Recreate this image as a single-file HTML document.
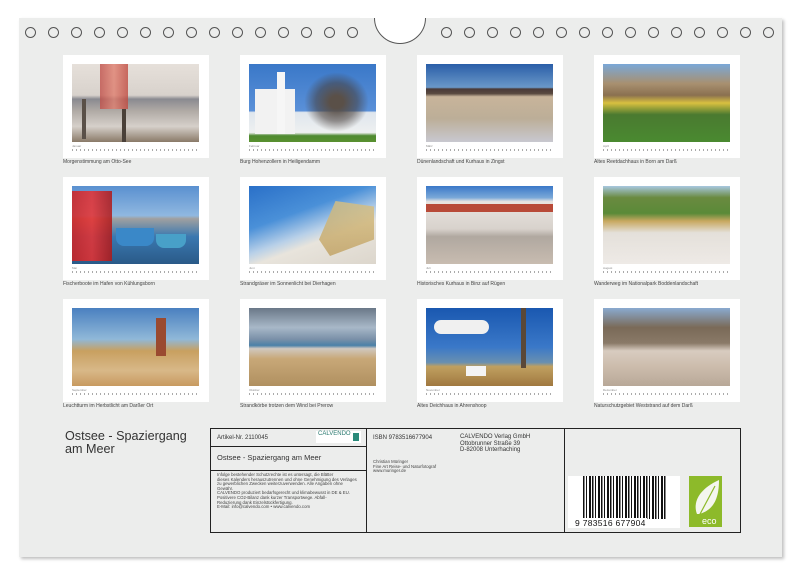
<!DOCTYPE html>
<html><head><meta charset="utf-8"><style>
*{margin:0;padding:0;box-sizing:border-box}
body{width:800px;height:577px;background:#fff;position:relative;overflow:hidden;font-family:"Liberation Sans",sans-serif;color:#333}
.panel{position:absolute;left:19px;top:18px;width:763px;height:539px;background:#ecedec;box-shadow:2px 2px 3px rgba(0,0,0,.25)}
.hole{position:absolute;top:27px;width:11px;height:11px;border:1.3px solid #555;border-radius:50%}
.notch{position:absolute;left:374px;top:-8px;width:52px;height:52px;border:1.3px solid #555;border-radius:50%;background:#fff}
.card{position:absolute;width:146px;height:103px;background:#fff}
.img{position:absolute;left:9px;top:9px;width:127px;height:78px;overflow:hidden}
.cal{position:absolute;left:9px;top:89px;width:127px;height:8px;font-size:3px;color:#888}
.cal:before{content:"";position:absolute;left:0;top:5px;width:127px;height:2px;background:repeating-linear-gradient(90deg,#aaa 0 1px,transparent 1px 4px)}
.cap{position:absolute;font-size:5px;color:#444;white-space:nowrap}
.box{position:absolute;border:1.3px solid #222}
</style></head><body>
<div class="panel"></div>
<div class="notch"></div>
<div style="position:absolute;left:360px;top:0;width:80px;height:18px;background:#fff"></div>

<div class="hole" style="left:25px"></div><div class="hole" style="left:48px"></div><div class="hole" style="left:71px"></div><div class="hole" style="left:94px"></div><div class="hole" style="left:117px"></div><div class="hole" style="left:140px"></div><div class="hole" style="left:163px"></div><div class="hole" style="left:186px"></div><div class="hole" style="left:209px"></div><div class="hole" style="left:232px"></div><div class="hole" style="left:255px"></div><div class="hole" style="left:278px"></div><div class="hole" style="left:301px"></div><div class="hole" style="left:324px"></div><div class="hole" style="left:347px"></div>
<div class="hole" style="left:441px"></div><div class="hole" style="left:464px"></div><div class="hole" style="left:487px"></div><div class="hole" style="left:510px"></div><div class="hole" style="left:533px"></div><div class="hole" style="left:556px"></div><div class="hole" style="left:579px"></div><div class="hole" style="left:602px"></div><div class="hole" style="left:625px"></div><div class="hole" style="left:648px"></div><div class="hole" style="left:671px"></div><div class="hole" style="left:694px"></div><div class="hole" style="left:717px"></div><div class="hole" style="left:740px"></div><div class="hole" style="left:763px"></div>

<!-- row 1 -->
<div class="card" style="left:63px;top:55px"><div class="img" style="background:linear-gradient(180deg,#e6e0da 0%,#d8d2cc 40%,#8a8a90 45%,#b0aaa5 60%,#d6d0ca 80%,#8a7a68 100%)"><div style="position:absolute;left:28px;top:0;width:28px;height:45px;background:linear-gradient(90deg,#c0504a,#e08070,#c04a40);opacity:.8"></div><div style="position:absolute;left:50px;top:45px;width:4px;height:33px;background:#4a4038"></div><div style="position:absolute;left:10px;top:35px;width:4px;height:40px;background:#5a5048"></div></div><div class="cal">Januar</div></div>
<div class="cap" style="left:63px;top:159px">Morgenstimmung am Otto-See</div>
<div class="card" style="left:240px;top:55px"><div class="img" style="background:linear-gradient(180deg,#3a78c8 0%,#5a90d8 60%,#dfe6ee 62%,#eef0f0 88%,#4e8a30 92%,#5a9030 100%)"><div style="position:absolute;left:6px;top:25px;width:40px;height:45px;background:#f2f2f2"></div><div style="position:absolute;left:28px;top:8px;width:8px;height:62px;background:#f6f6f6"></div><div style="position:absolute;left:55px;top:8px;width:65px;height:60px;border-radius:50%;background:radial-gradient(#5a5048 15%,rgba(70,60,55,.55) 45%,transparent 70%)"></div></div><div class="cal">Februar</div></div>
<div class="cap" style="left:240px;top:159px">Burg Hohenzollern in Heiligendamm</div>
<div class="card" style="left:417px;top:55px"><div class="img" style="background:linear-gradient(180deg,#2a5ea8 0%,#6a98c8 30%,#4a3a38 32%,#5a4a40 38%,#c8b49a 42%,#bcae98 70%,#c8c8d0 100%)"></div><div class="cal">März</div></div>
<div class="cap" style="left:417px;top:159px">Dünenlandschaft und Kurhaus in Zingst</div>
<div class="card" style="left:594px;top:55px"><div class="img" style="background:linear-gradient(180deg,#7aa8d8 0%,#a89070 25%,#8a7050 40%,#d8c040 50%,#4a7a30 65%,#4a8a30 100%)"></div><div class="cal">April</div></div>
<div class="cap" style="left:594px;top:159px">Altes Reetdachhaus in Born am Darß</div>

<!-- row 2 -->
<div class="card" style="left:63px;top:177px"><div class="img" style="background:linear-gradient(180deg,#5a90d0 0%,#90b8e0 38%,#a0a0a0 42%,#3a78b0 65%,#2a5a88 100%)"><div style="position:absolute;left:0;top:5px;width:40px;height:70px;background:linear-gradient(90deg,#d02020,#e83030,#b01818);opacity:.85"></div><div style="position:absolute;left:44px;top:42px;width:38px;height:18px;background:#3a88c8;border-radius:0 0 8px 8px"></div><div style="position:absolute;left:84px;top:48px;width:30px;height:14px;background:#48a0c8;border-radius:0 0 8px 8px"></div></div><div class="cal">Mai</div></div>
<div class="cap" style="left:63px;top:281px">Fischerboote im Hafen von Kühlungsborn</div>
<div class="card" style="left:240px;top:177px"><div class="img" style="background:linear-gradient(160deg,#2a70c8 0%,#4a90d8 35%,#b8d0e8 55%,#e8e4dc 65%,#dcd6cc 100%)"><div style="position:absolute;left:70px;top:15px;width:55px;height:55px;background:linear-gradient(180deg,#d8c080,#c0a060);opacity:.8;clip-path:polygon(30% 0,100% 10%,100% 70%,20% 100%,0 70%)"></div></div><div class="cal">Juni</div></div>
<div class="cap" style="left:240px;top:281px">Strandgräser im Sonnenlicht bei Dierhagen</div>
<div class="card" style="left:417px;top:177px"><div class="img" style="background:linear-gradient(180deg,#3a78c8 0%,#7aa8d8 15%,#e8e4e0 20%,#d8d2cc 55%,#b0a8a0 65%,#c8bcb0 100%)"><div style="position:absolute;left:0;top:18px;width:127px;height:8px;background:#b84a38"></div></div><div class="cal">Juli</div></div>
<div class="cap" style="left:417px;top:281px">Historisches Kurhaus in Binz auf Rügen</div>
<div class="card" style="left:594px;top:177px"><div class="img" style="background:linear-gradient(180deg,#a8c8e0 0%,#6a8a40 15%,#5a8a38 35%,#c8a860 45%,#e4e0da 60%,#eeeae6 100%)"></div><div class="cal">August</div></div>
<div class="cap" style="left:594px;top:281px">Wanderweg im Nationalpark Boddenlandschaft</div>

<!-- row 3 -->
<div class="card" style="left:63px;top:299px"><div class="img" style="background:linear-gradient(180deg,#4a80c0 0%,#90b8d8 40%,#c8a060 55%,#d8b888 80%,#c89a60 100%)"><div style="position:absolute;left:84px;top:10px;width:10px;height:38px;background:#9a4a30"></div></div><div class="cal">September</div></div>
<div class="cap" style="left:63px;top:403px">Leuchtturm im Herbstlicht am Darßer Ort</div>
<div class="card" style="left:240px;top:299px"><div class="img" style="background:linear-gradient(180deg,#6a7888 0%,#a8b8c8 25%,#7a90a8 40%,#4a80a8 48%,#d0c8c0 52%,#c8a878 65%,#b09060 100%)"></div><div class="cal">Oktober</div></div>
<div class="cap" style="left:240px;top:403px">Strandkörbe trotzen dem Wind bei Prerow</div>
<div class="card" style="left:417px;top:299px"><div class="img" style="background:linear-gradient(180deg,#1a58b0 0%,#3a78c8 50%,#6a90b0 70%,#c0a060 75%,#a07840 100%)"><div style="position:absolute;left:8px;top:12px;width:55px;height:14px;border-radius:10px;background:#f0f0f0"></div><div style="position:absolute;left:40px;top:58px;width:20px;height:10px;background:#f4f4f4"></div><div style="position:absolute;left:95px;top:0;width:5px;height:60px;background:#5a4838"></div></div><div class="cal">November</div></div>
<div class="cap" style="left:417px;top:403px">Altes Deichhaus in Ahrenshoop</div>
<div class="card" style="left:594px;top:299px"><div class="img" style="background:linear-gradient(180deg,#8aaad0 0%,#7a6a58 25%,#8a7a68 45%,#d8ccc0 55%,#ccbcac 75%,#b8a898 100%)"></div><div class="cal">Dezember</div></div>
<div class="cap" style="left:594px;top:403px">Naturschutzgebiet Weststrand auf dem Darß</div>

<!-- bottom -->
<div style="position:absolute;left:65px;top:430px;font-size:12.6px;line-height:12.5px;color:#333">Ostsee - Spaziergang<br>am Meer</div>
<div class="box" style="left:210px;top:428px;width:531px;height:105px"></div>
<div style="position:absolute;left:366px;top:428px;width:1.3px;height:105px;background:#222"></div>
<div style="position:absolute;left:564px;top:428px;width:1.3px;height:105px;background:#222"></div>
<div style="position:absolute;left:210px;top:446px;width:156px;height:1.3px;background:#222"></div>
<div style="position:absolute;left:210px;top:470px;width:156px;height:1.3px;background:#222"></div>
<div style="position:absolute;left:217px;top:435px;font-size:6px">Artikel-Nr. 2110045</div>
<div style="position:absolute;left:316px;top:431px;width:45px;height:12px;background:#fff;font-size:6px;color:#2a7a70;padding-left:2px">CALVENDO<span style="position:absolute;right:2px;top:2px;width:6px;height:8px;background:#2a8a7a"></span></div>
<div style="position:absolute;left:217px;top:453px;font-size:7.5px">Ostsee - Spaziergang am Meer</div>
<div style="position:absolute;left:217px;top:473px;font-size:4.3px;line-height:4.6px;color:#444;width:150px">Infolge bestehender Schutzrechte ist es untersagt, die Blätter<br>dieses Kalenders herauszutrennen und ohne Genehmigung des Verlages<br>zu gewerblichen Zwecken weiterzuverwenden. Alle Angaben ohne<br>Gewähr.<br>CALVENDO produziert bedarfsgerecht und klimabewusst in DE &amp; EU.<br>Positivere CO2-Bilanz dank kurzer Transportwege. Abfall-<br>Reduzierung dank Einzelstückfertigung.<br>E-Mail: info@calvendo.com • www.calvendo.com</div>
<div style="position:absolute;left:373px;top:435px;font-size:6px">ISBN 9783516677904</div>
<div style="position:absolute;left:460px;top:434px;font-size:6px;line-height:6.5px">CALVENDO Verlag GmbH<br>Ottobrunner Straße 39<br>D-82008 Unterhaching</div>
<div style="position:absolute;left:373px;top:460px;font-size:4.3px;line-height:4.6px;color:#444">Christian Müringer<br>Fine Art Reise- und Naturfotograf<br>www.muringer.de</div>
<div style="position:absolute;left:568px;top:476px;width:112px;height:52px;background:#fff"></div>
<div style="position:absolute;left:583px;top:476px;width:84px;height:43px;background:repeating-linear-gradient(90deg,#111 0 1.5px,#fff 1.5px 3px,#111 3px 4px,#fff 4px 6px,#111 6px 8px,#fff 8px 9px)"></div>
<div style="position:absolute;left:574px;top:518px;font-size:8.5px;letter-spacing:.3px;color:#111;background:#fff;padding:0 1px">9 783516 677904</div>
<div style="position:absolute;left:689px;top:476px;width:33px;height:51px;background:#8dba2a">
<svg width="33" height="51" viewBox="0 0 33 51"><path d="M8 38 C4 28 8 14 30 4 C30 20 26 34 10 38 Z" fill="#f4f6ee"/><path d="M10 40 L26 10" stroke="#8dba2a" stroke-width="1.2"/><text x="13" y="48" font-size="9" fill="#fff" font-family="Liberation Sans, sans-serif">eco</text></svg></div>
</body></html>
